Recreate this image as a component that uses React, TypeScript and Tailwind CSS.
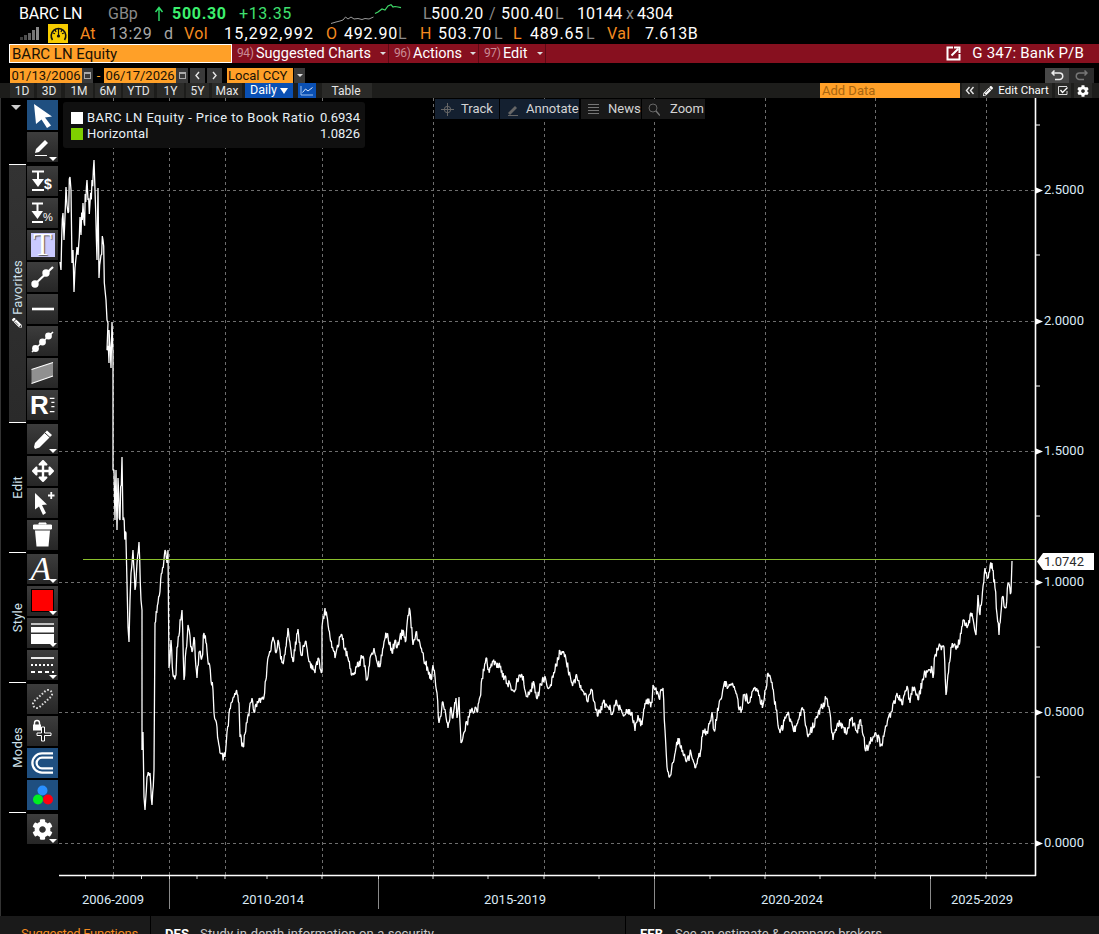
import React from "react";
import { FaCog, FaArrowsAlt, FaPencilAlt } from "react-icons/fa";

const K: number[][] = [
[60,262],[61,270],[63,213],[64,240],[66,187],[67,205],[68,213],[70,177],[71,190],[72,263],[73,250],[74,292],[75,268],[77,247],[78,255],[80,217],[81,235],[83,203],[84,222],[87,180],[88,200],[90,203],[92,180],[94,160],[95,190],[97,260],[98,188],[99,278],[101,255],[103,240],[105,290],[106,300],[107,320],[108,323],[107,350],[109,363],[109,330],[111,368],[112,322],[113,353],[113,470],[114,470],[115,520],[116,470],[117,530],[118,478],[120,520],[122,457],[123,520],[126,533],[126,540],[127,583],[128,627],[129,642],[130,600],[131,573],[133,550],[135,590],[137,563],[139,542],[141,600],[142,610],[142,750],[143,732],[144,797],[145,810],[147,777],[150,773],[152,805],[154,770],[155,623],[158,603],[162,573],[165,550],[167,563],[168,550],[169,668],[171,640],[173,675],[176,675],[177,647],[182,610],[184,680],[188,625],[192,652],[194,637],[197,678],[199,652],[202,657],[204,633],[209,663],[213,690],[214,713],[217,727],[220,753],[225,757],[227,732],[231,703],[236,692],[239,703],[240,737],[243,747],[247,723],[252,698],[254,712],[258,703],[264,697],[267,667],[269,655],[273,637],[276,653],[278,640],[282,663],[285,655],[288,628],[293,662],[298,629],[301,655],[306,641],[309,662],[315,673],[318,658],[322,672],[322,627],[325,608],[330,637],[335,658],[340,637],[342,635],[345,650],[348,658],[352,675],[357,667],[363,656],[367,680],[370,658],[374,648],[377,662],[380,667],[384,642],[387,634],[392,653],[395,640],[397,648],[403,630],[406,640],[408,615],[410,611],[413,645],[416,632],[422,652],[425,662],[428,670],[431,680],[433,665],[437,693],[439,723],[443,702],[448,728],[451,707],[453,718],[456,698],[457,718],[459,697],[461,743],[467,723],[472,708],[477,712],[480,697],[482,678],[486,658],[488,670],[495,661],[500,668],[507,683],[515,690],[519,675],[522,675],[527,696],[534,683],[537,699],[543,677],[550,687],[555,670],[560,651],[564,653],[572,683],[577,677],[588,702],[591,689],[598,716],[603,703],[613,712],[616,700],[622,713],[632,712],[635,731],[638,715],[642,725],[645,703],[652,703],[653,685],[659,698],[663,688],[665,730],[667,767],[669,777],[674,760],[678,738],[682,752],[687,760],[691,753],[695,768],[699,753],[700,757],[703,730],[707,732],[712,712],[714,730],[720,700],[724,684],[728,687],[733,685],[741,713],[744,695],[750,702],[755,687],[763,705],[768,673],[772,682],[776,710],[780,733],[788,712],[794,732],[800,712],[803,710],[808,737],[817,718],[822,707],[826,699],[830,713],[833,740],[838,723],[847,733],[851,718],[857,732],[860,720],[866,751],[875,733],[882,746],[885,730],[891,712],[897,693],[902,705],[907,686],[910,703],[913,688],[918,700],[924,675],[932,668],[933,678],[935,655],[940,646],[944,647],[946,695],[951,647],[958,647],[963,620],[967,628],[972,613],[976,635],[978,595],[980,615],[985,568],[987,578],[992,563],[995,588],[999,635],[1002,598],[1006,608],[1008,583],[1011,592],[1012,561],
];

function buildSeries(): string {
  let s = 12345;
  const rnd = () => {
    s = (s * 1664525 + 1013904223) >>> 0;
    return s / 4294967296 - 0.5;
  };
  const out: string[] = [];
  for (let i = 0; i < K.length - 1; i++) {
    const [x0, y0] = K[i];
    const [x1, y1] = K[i + 1];
    out.push(`${x0},${y0}`);
    const n = Math.floor((x1 - x0) / 0.6);
    for (let j = 1; j < n; j++) {
      const t = j / n;
      const amp = x0 < 126 ? 26 : x0 < 240 ? 11 : 9;
      out.push(`${(x0 + (x1 - x0) * t).toFixed(1)},${(y0 + (y1 - y0) * t + rnd() * amp).toFixed(1)}`);
    }
  }
  out.push("1012,561");
  return out.join(" ");
}
const SERIES = buildSeries();

const VDASH = [113, 169, 225, 322, 433, 544, 654, 765, 875, 986];
const HDASH = [190, 321, 451, 582, 712, 843];
const XTICKS = [85.5, 113, 141.5, 169.5, 197, 225, 267, 322, 378.5, 433, 488, 544, 599, 654.5, 710, 765, 820, 875, 930.5, 986];
const SEPS = [169.5, 378.5, 654.5, 930.5];
const YMINOR = [125, 255, 386, 516, 647, 777];

function Tri() {
  return <span className="absolute right-0 bottom-0 w-0 h-0 border-l-[4px] border-r-[4px] border-t-[4px] border-l-transparent border-r-transparent border-t-white mr-[1px] mb-[1px]" />;
}

function Btn({ children, blue, tri }: { children?: React.ReactNode; blue?: boolean; tri?: boolean }) {
  return (
    <div className={blue ? "relative w-[31px] h-[30px] mb-[2px] bg-[#1f4f80] flex items-center justify-center" : "relative w-[31px] h-[30px] mb-[2px] bg-gradient-to-b from-[#3d3d3d] to-[#262626] flex items-center justify-center"}>
      {children}
      {tri ? <Tri /> : null}
    </div>
  );
}

function I({ children }: { children: React.ReactNode }) {
  return (
    <svg width="31" height="30" viewBox="0 0 31 30" fill="none">
      {children}
    </svg>
  );
}

function Group({ label, children, fill, pencil }: { label?: string; children: React.ReactNode; fill?: boolean; pencil?: boolean }) {
  return (
    <div className="flex">
      <div className={fill ? "ml-[8px] w-[17px] mr-[1px] border-t border-white bg-gradient-to-b from-[#333] to-[#2a2a2a] flex items-center justify-center" : "ml-[8px] w-[17px] mr-[1px] border-t border-white flex items-center justify-center"}>
        {label ? (
          <span className="[writing-mode:vertical-rl] rotate-180 text-[13px] leading-[17px] tracking-[0.2px] text-[#cfe0ea] flex items-center gap-[3px]">
            {pencil ? <FaPencilAlt className="text-white rotate-90" size={10} /> : null}
            {label}
          </span>
        ) : null}
      </div>
      <div className="pt-[2px]">{children}</div>
    </div>
  );
}

function Tab({ className, children }: { className: string; children: React.ReactNode }) {
  return <span className={"flex items-center justify-center h-[15px] text-[12px] text-[#e6e6e6] bg-[#2a2a28] " + className}>{children}</span>;
}

function AxisLabel({ className, children }: { className: string; children: React.ReactNode }) {
  return <span className={"absolute text-[13px] leading-[16px] text-[#dcebf7] " + className}>{children}</span>;
}

export default function App() {
  return (
    <div className="w-[1099px] h-[934px] bg-black overflow-hidden flex flex-col font-['Roboto',sans-serif] text-white">
      {/* Row 1 */}
      <div className="h-[22px] pl-[19px] pt-[6px] flex items-center text-[16px] leading-[18px] shrink-0">
        <span className="w-[89px] tracking-[-0.2px]">BARC LN</span>
        <span className="w-[46px] text-[#8a8a8a]">GBp</span>
        <span className="w-[18px] text-[#33e36a]">
          <svg width="10" height="16" viewBox="0 0 10 16" fill="none"><path d="M5 15V2M1.5 6L5 1.5L8.5 6" stroke="#2fe06a" strokeWidth="1.4" /></svg>
        </span>
        <span className="w-[67px] font-bold text-[#3cf06e] tracking-[0.7px]">500.30</span>
        <span className="w-[92px] text-[#3fe06f] tracking-[0.6px]">+13.35</span>
        <svg width="72" height="22" viewBox="331 1 72 22" className="w-[92px] shrink-0" preserveAspectRatio="xMinYMid meet" fill="none">
          <polyline points="331,21.5 336,20 340,19 343,18 345.5,15 348,17 351,15 354,17 358,16.5 362,17.5 365,16.5 369,17 373.5,15" stroke="#9a9a9a" strokeWidth="1" />
          <polyline points="375,11.5 378,10 382,7 385,8 388,4 391,2.7 393,5 395,4.5 398,5 401,5.7" stroke="#3fd868" strokeWidth="1.2" />
        </svg>
        <span className="w-[8px] text-[#8a8a8a]">L</span>
        <span className="w-[58px] tracking-[0.6px]">500.20</span>
        <span className="w-[12px] text-[#8a8a8a]">/</span>
        <span className="w-[54px] tracking-[0.6px]">500.40</span>
        <span className="w-[22px] text-[#8a8a8a]">L</span>
        <span className="w-[49px] tracking-[0.1px]">10144</span>
        <span className="w-[11px] text-[#8a8a8a]">x</span>
        <span>4304</span>
      </div>
      {/* Row 2 */}
      <div className="h-[22px] pl-[20px] pt-[1px] flex items-center text-[16px] leading-[18px] shrink-0">
        <svg width="20" height="15" viewBox="0 0 20 15" className="w-[28px] shrink-0" preserveAspectRatio="xMinYMid meet">
          <rect x="0" y="11" width="3" height="3" fill="#3c3c3c" />
          <rect x="4" y="9" width="3" height="5" fill="#4e4e4e" />
          <rect x="8" y="7" width="3" height="7" fill="#626262" />
          <rect x="12" y="4" width="3" height="10" fill="#747474" />
          <rect x="16" y="1" width="3" height="13" fill="#888" />
        </svg>
        <span className="w-[20px] h-[19px] bg-[#f7cc00] flex items-center justify-center shrink-0">
          <svg width="17" height="17" viewBox="0 0 17 17" fill="none">
            <path d="M2.5 15A7.3 7.3 0 1 1 14.5 15" stroke="#111" strokeWidth="1.6" />
            <path d="M8.5 4V10M5 4.5L6 7M12 4.5L11 7M3 8L5 8.8M14 8L12 8.8" stroke="#111" strokeWidth="1.2" />
            <circle cx="8.5" cy="11" r="1.6" fill="#111" />
          </svg>
        </span>
        <span className="ml-[12px] w-[29px] text-[#f58a1f]">At</span>
        <span className="w-[55px] text-[#a8a8a8] tracking-[0.7px]">13:29</span>
        <span className="w-[20px] text-[#a8a8a8]">d</span>
        <span className="w-[40px] text-[#f58a1f] tracking-[0.4px]">Vol</span>
        <span className="w-[102px] tracking-[1.2px]">15,292,992</span>
        <span className="w-[18px] text-[#f58a1f]">O</span>
        <span className="w-[54px] tracking-[0.8px]">492.90</span>
        <span className="w-[22px] text-[#8a8a8a]">L</span>
        <span className="w-[18px] text-[#f58a1f]">H</span>
        <span className="w-[56px] tracking-[0.8px]">503.70</span>
        <span className="w-[19px] text-[#8a8a8a]">L</span>
        <span className="w-[17px] text-[#f58a1f]">L</span>
        <span className="w-[56px] tracking-[0.8px]">489.65</span>
        <span className="w-[21px] text-[#8a8a8a]">L</span>
        <span className="w-[38px] text-[#f58a1f] tracking-[0.4px]">Val</span>
        <span className="tracking-[0.5px]">7.613B</span>
      </div>
      {/* Row 3 */}
      <div className="h-[19px] flex pl-[9px] text-[14.5px] leading-[19px] shrink-0">
        <div className="w-[223px] h-[19px] bg-[#ffa028] border border-white text-[#1a1205] pl-[2px] leading-[18px] text-[15px]">BARC LN Equity</div>
        <div className="flex-1 flex bg-[#87101f]">
          <div className="w-[157px] flex items-center pl-[5px] border-r border-[#5c0a15]">
            <span className="w-[19px] text-[#c98c95] text-[12px] tracking-[-0.4px]">94)</span>
            <span className="w-[124px]">Suggested Charts</span>
            <span className="w-0 h-0 border-l-[3px] border-r-[3px] border-t-[3px] border-l-transparent border-r-transparent border-t-[#ddd]" />
          </div>
          <div className="w-[90px] flex items-center pl-[5px] border-r border-[#5c0a15]">
            <span className="w-[19px] text-[#c98c95] text-[12px] tracking-[-0.4px]">96)</span>
            <span className="w-[57px]">Actions</span>
            <span className="w-0 h-0 border-l-[3px] border-r-[3px] border-t-[3px] border-l-transparent border-r-transparent border-t-[#ddd]" />
          </div>
          <div className="w-[67px] flex items-center pl-[5px] border-r border-[#5c0a15]">
            <span className="w-[19px] text-[#c98c95] text-[12px] tracking-[-0.4px]">97)</span>
            <span className="w-[34px]">Edit</span>
            <span className="w-0 h-0 border-l-[3px] border-r-[3px] border-t-[3px] border-l-transparent border-r-transparent border-t-[#ddd]" />
          </div>
          <div className="ml-auto flex items-center pr-[15px] gap-[11px]">
            <svg width="15" height="15" viewBox="0 0 15 15" fill="none">
              <path d="M7 1.5H1.5V13.5H13.5V8" stroke="white" strokeWidth="2" />
              <path d="M5.5 9.5L12 3M8 1.5H13.5V7" stroke="white" strokeWidth="2" />
            </svg>
            <span className="text-[15px] tracking-[0.2px]">G 347: Bank P/B</span>
          </div>
        </div>
      </div>
      {/* Row 4 */}
      <div className="h-[15px] mt-[5px] flex pl-[10px] text-[13px] leading-[15px] shrink-0">
        <span className="w-[72px] bg-[#ffa028] text-[#1a1205] text-center">01/13/2006</span>
        <span className="w-[11px] bg-[#3a3a3a] flex items-center justify-center">
          <span className="w-[7px] h-[7px] border border-[#aaa] border-t-2" />
        </span>
        <span className="w-[11px] text-[#ffa028] text-center">-</span>
        <span className="w-[72px] bg-[#ffa028] text-[#1a1205] text-center">06/17/2026</span>
        <span className="w-[12px] bg-[#3a3a3a] flex items-center justify-center">
          <span className="w-[7px] h-[7px] border border-[#aaa] border-t-2" />
        </span>
        <span className="ml-[2px] w-[15px] bg-[#3a3a3a] flex items-center justify-center">
          <svg width="7" height="9" viewBox="0 0 7 9" fill="none"><path d="M5 1L2 4.5L5 8" stroke="#e8e8e8" strokeWidth="1.4" /></svg>
        </span>
        <span className="ml-[2px] w-[15px] bg-[#3a3a3a] flex items-center justify-center">
          <svg width="7" height="9" viewBox="0 0 7 9" fill="none"><path d="M2 1L5 4.5L2 8" stroke="#e8e8e8" strokeWidth="1.4" /></svg>
        </span>
        <span className="ml-[5px] w-[66px] bg-[#ffa028] text-[#1a1205] pl-[1px]">Local CCY</span>
        <span className="ml-[1px] w-[11px] bg-[#3a3a3a] flex items-center justify-center">
          <span className="w-0 h-0 border-l-[3px] border-r-[3px] border-t-[3px] border-l-transparent border-r-transparent border-t-[#ddd]" />
        </span>
        <span className="ml-auto w-[24px] bg-[#484848] flex items-center justify-center">
          <svg width="13" height="11" viewBox="0 0 13 11" fill="none"><path d="M1 3H8.5A3.2 3.2 0 0 1 8.5 9.5H4M3.5 0.5L1 3L3.5 5.5" stroke="#eee" strokeWidth="1.5" /></svg>
        </span>
        <span className="mr-[5px] w-[25px] bg-[#2c2c2c] flex items-center justify-center">
          <svg width="13" height="11" viewBox="0 0 13 11" fill="none"><path d="M12 3H4.5A3.2 3.2 0 0 0 4.5 9.5H9M9.5 0.5L12 3L9.5 5.5" stroke="#777" strokeWidth="1.5" /></svg>
        </span>
      </div>
      {/* Row 5 */}
      <div className="h-[15px] flex pl-[10px] bg-[#1d1d1b] shrink-0">
        <Tab className="w-[24px]">1D</Tab>
        <Tab className="ml-[3px] w-[24px]">3D</Tab>
        <Tab className="ml-[4px] w-[28px]">1M</Tab>
        <Tab className="ml-[2px] w-[26px]">6M</Tab>
        <Tab className="ml-[2px] w-[31px]">YTD</Tab>
        <Tab className="ml-[3px] w-[27px]">1Y</Tab>
        <Tab className="ml-[2px] w-[23px]">5Y</Tab>
        <Tab className="ml-[3px] w-[30px]">Max</Tab>
        <span className="ml-[3px] w-[48px] h-[15px] bg-[#0a50b4] text-[12.5px] text-white flex items-center justify-center gap-[3px]">
          Daily
          <span className="w-0 h-0 border-l-[4px] border-r-[4px] border-t-[6px] border-l-transparent border-r-transparent border-t-white" />
        </span>
        <span className="ml-[5px] w-[18px] h-[15px] bg-[#0a50b4] flex items-center justify-center">
          <svg width="14" height="11" viewBox="0 0 14 11" fill="none"><path d="M1 1V10H13" stroke="#9cc0ee" strokeWidth="1" /><path d="M2.5 7.5L5.5 4L8 6L12.5 2.5" stroke="#dce9fa" strokeWidth="1" /></svg>
        </span>
        <Tab className="ml-[6px] w-[50px] pr-[2px]">Table</Tab>
        <span className="ml-auto w-[140px] h-[15px] bg-[#ffa028] text-[13px] leading-[16px] text-[#a8650f] pl-[2px] overflow-hidden">Add Data</span>
        <span className="ml-[2px] w-[16px] h-[15px] bg-[#2a2a28] flex items-center justify-center">
          <svg width="10" height="9" viewBox="0 0 10 9" fill="none"><path d="M4.5 1L1.5 4.5L4.5 8M8.5 1L5.5 4.5L8.5 8" stroke="#e8e8e8" strokeWidth="1.4" /></svg>
        </span>
        <span className="ml-[2px] w-[72px] h-[15px] bg-[#2a2a28] text-[11.5px] text-white flex items-center justify-center gap-[5px]">
          <FaPencilAlt size={10} />
          Edit Chart
        </span>
        <span className="ml-[3px] w-[16px] h-[15px] bg-[#2a2a28] flex items-center justify-center">
          <svg width="10" height="9" viewBox="0 0 10 9" fill="none"><path d="M9 0.5H0.5V8.5H9V5" stroke="#ddd" strokeWidth="1" /><path d="M2.5 4L4.5 6.5L9.5 1.5" stroke="#fff" strokeWidth="1.3" /></svg>
        </span>
        <span className="ml-[3px] mr-[7px] w-[18px] h-[15px] bg-[#2a2a28] flex items-center justify-center">
          <FaCog size={12} className="text-white" />
        </span>
      </div>
      {/* Main */}
      <div className="h-[818px] flex shrink-0">
        <aside className="w-[59px] shrink-0 flex flex-col pt-[2px] border-l border-[#333]">
          <div className="flex">
            <div className="w-[26px] pl-[10px] pt-[5px]">
              <span className="block w-0 h-0 border-l-[5px] border-r-[5px] border-t-[5px] border-l-transparent border-r-transparent border-t-[#ccc]" />
            </div>
            <div>
              <Btn blue>
                <I><path d="M7 4L25 16.5L18 17.5L24 25.5L20 28L14.5 19.5L9 24Z" fill="white" /></I>
              </Btn>
              <Btn tri>
                <I>
                  <path d="M9 17L18 8L21 11L12 20L8 21Z" fill="white" />
                  <path d="M8 23.5H20" stroke="white" strokeWidth="1" />
                </I>
              </Btn>
            </div>
          </div>
          <Group label="Favorites" fill pencil>
            <Btn>
              <I>
                <path d="M5 5.5H17M11 5.5V13" stroke="white" strokeWidth="2" />
                <path d="M5 13H17L11 21Z" fill="white" />
                <path d="M5 24H17" stroke="white" strokeWidth="2" />
                <text x="17" y="23" fontFamily="Liberation Sans" fontWeight="700" fontSize="14" fill="white">$</text>
              </I>
            </Btn>
            <Btn>
              <I>
                <path d="M5 5.5H16M10.5 5.5V13" stroke="white" strokeWidth="2" />
                <path d="M4.5 13H16L10.5 21Z" fill="white" />
                <path d="M5 24H16" stroke="white" strokeWidth="2" />
                <text x="16" y="23" fontFamily="Liberation Sans" fontSize="11" fill="white">%</text>
              </I>
            </Btn>
            <Btn>
              <span className="w-[24px] h-[24px] bg-[#cacaff] flex items-center justify-center text-[31px] leading-[24px] text-white font-['Liberation_Serif',serif] [text-shadow:1px_1px_1px_#555]">T</span>
            </Btn>
            <Btn>
              <I>
                <path d="M8 22L26 5" stroke="white" strokeWidth="2.2" />
                <circle cx="8" cy="22" r="3.7" fill="white" />
                <circle cx="19" cy="11" r="3.7" fill="white" />
              </I>
            </Btn>
            <Btn>
              <I><path d="M5 15H27" stroke="white" strokeWidth="2.6" /></I>
            </Btn>
            <Btn>
              <I>
                <path d="M5 26L26 6" stroke="white" strokeWidth="1.6" />
                <circle cx="8.5" cy="22.5" r="3.4" fill="white" />
                <circle cx="15.5" cy="16" r="3.4" fill="white" />
                <circle cx="21.5" cy="10" r="3.4" fill="white" />
              </I>
            </Btn>
            <Btn>
              <I>
                <path d="M4.5 11.5L26 4.5V18L4.5 25.5Z" fill="#909090" />
                <path d="M4.5 11.5L26 4.5M4.5 25.5L26 18" stroke="white" strokeWidth="1.2" />
              </I>
            </Btn>
            <Btn>
              <span className="flex items-center text-[26px] leading-[26px] font-bold font-['Liberation_Sans',sans-serif] text-white w-[25px]">
                R
                <svg width="8" height="20" viewBox="0 0 8 20"><path d="M1 1.5H7M3 6.5H7M3 12H7M1 18.5H7" stroke="white" strokeWidth="1.6" /></svg>
              </span>
            </Btn>
          </Group>
          <Group label="Edit">
            <Btn tri>
              <I>
                <path d="M8 19L20 6.5L25 11L12.5 23.5L8 25L7 23Z" fill="white" />
                <path d="M18 9L23 13.5" stroke="#333" strokeWidth="1" />
              </I>
            </Btn>
            <Btn><FaArrowsAlt size={22} className="text-white" /></Btn>
            <Btn>
              <I>
                <path d="M8 5L20 16.5L15 17L19 25L16 27L12 18.5L8 21.5Z" fill="white" />
                <path d="M21 7.5H27.5M24.25 4V11" stroke="white" strokeWidth="1.8" />
              </I>
            </Btn>
            <Btn>
              <I>
                <path d="M12 4.5V3H19V4.5M6.5 5H24.5V9H6.5Z" fill="white" stroke="white" strokeWidth="1" />
                <path d="M8 10.5H23L21.5 26.5H9.5Z" fill="white" />
              </I>
            </Btn>
          </Group>
          <Group label="Style">
            <Btn tri>
              <span className="text-[34px] leading-[30px] italic text-white font-['Liberation_Serif',serif] pr-[3px]">A</span>
            </Btn>
            <Btn tri>
              <span className="w-[23px] h-[23px] bg-[#ff0000] border border-black mb-[1px]" />
            </Btn>
            <Btn tri>
              <I>
                <path d="M4 6H27" stroke="white" strokeWidth="1.4" />
                <rect x="4" y="9" width="23" height="5.5" fill="white" />
                <rect x="4" y="16" width="23" height="10" fill="white" />
              </I>
            </Btn>
            <Btn tri>
              <I>
                <path d="M4 8H27" stroke="white" strokeWidth="1.8" />
                <path d="M4 15H27" stroke="white" strokeWidth="1.8" strokeDasharray="2 2" />
                <path d="M4 22H27" stroke="white" strokeWidth="1.8" strokeDasharray="4 3" />
              </I>
            </Btn>
          </Group>
          <Group label="Modes">
            <Btn>
              <I>
                <rect x="4" y="11" width="23" height="8" rx="4" transform="rotate(-42 15.5 15)" stroke="#ddd" strokeWidth="2" strokeDasharray="1.6 1.8" />
              </I>
            </Btn>
            <Btn>
              <I>
                <path d="M7.5 9V7A2.5 2.5 0 0 1 12.5 7V9" stroke="white" strokeWidth="1.4" />
                <rect x="6" y="8.5" width="8" height="6" fill="white" />
                <path d="M14.5 17H10V19.5H14.5V25H17.5V19.5H24V17H17.5V11H14.5Z" fill="#1a1a1a" stroke="white" strokeWidth="1" />
              </I>
            </Btn>
            <Btn blue>
              <I>
                <path d="M26 7.5H15A7.5 7.5 0 0 0 15 22.5H26" stroke="white" strokeWidth="6.5" />
                <path d="M26 7.5H15A7.5 7.5 0 0 0 15 22.5H26" stroke="#1f4f80" strokeWidth="2" />
              </I>
            </Btn>
            <Btn blue>
              <I>
                <circle cx="15.5" cy="10.5" r="5" fill="#2a90ff" />
                <circle cx="11" cy="19.5" r="5" fill="#00ee20" />
                <circle cx="21" cy="19.5" r="5" fill="#ff0010" />
              </I>
            </Btn>
          </Group>
          <Group>
            <Btn tri><FaCog size={21} className="text-white" /></Btn>
          </Group>
        </aside>

        <div className="relative flex-1">
          <svg width="1040" height="818" viewBox="59 98 1040 818" className="absolute inset-0" fill="none">
            {VDASH.map((x) => (
              <path key={x} d={`M${x + 0.5} 98V875`} stroke="#6e6e6e" strokeWidth="1" strokeDasharray="3 3" />
            ))}
            {HDASH.map((y) => (
              <path key={y} d={`M59 ${y + 0.5}H1035`} stroke="#6e6e6e" strokeWidth="1" strokeDasharray="3 3" />
            ))}
            {SEPS.map((x) => (
              <path key={x} d={`M${x} 875V909`} stroke="#8a8a8a" strokeWidth="1" />
            ))}
            {XTICKS.map((x) => (
              <path key={x} d={`M${x} 875V879`} stroke="#ddd" strokeWidth="1" />
            ))}
            <polyline points={SERIES} stroke="white" strokeWidth="1.3" strokeLinejoin="bevel" />
            <path d="M83 559.5H1036" stroke="#8abf2c" strokeWidth="1" />
            <path d="M1035.5 98V876M59 875.5H1036" stroke="white" strokeWidth="1.6" />
            {YMINOR.map((y) => (
              <path key={y} d={`M1036 ${y}H1040`} stroke="white" strokeWidth="1" />
            ))}
            {HDASH.map((y) => (
              <polygon key={y} points={`1036,${y - 2.5} 1043,${y + 0.5} 1036,${y + 3.5}`} fill="white" />
            ))}
          </svg>

          {/* Legend */}
          <div className="absolute left-[4px] top-[4px] w-[302px] h-[46px] bg-[#101010] rounded-[3px] pl-[8px] pt-[8px] text-[13px] leading-[16px] text-[#e8f0f6]">
            <div className="flex items-center h-[16px]">
              <span className="w-[12px] h-[12px] bg-white mr-[4px]" />
              <span className="w-[233px] tracking-[0.45px]">BARC LN Equity - Price to Book Ratio</span>
              <span>0.6934</span>
            </div>
            <div className="flex items-center h-[16px]">
              <span className="w-[12px] h-[12px] bg-[#7fd000] mr-[4px]" />
              <span className="w-[233px] tracking-[0.2px]">Horizontal</span>
              <span>1.0826</span>
            </div>
          </div>

          {/* Chart tools */}
          <div className="absolute left-[376px] top-[1px] h-[20px] flex text-[13px] leading-[20px] text-[#d4d4d4]">
            <div className="w-[64px] bg-[#142030] flex items-center pl-[6px] gap-[7px]">
              <svg width="13" height="13" viewBox="0 0 13 13" fill="none"><circle cx="6.5" cy="6.5" r="3.2" stroke="#666" /><path d="M6.5 0V13M0 6.5H13" stroke="#666" /></svg>
              Track
            </div>
            <div className="ml-[1px] w-[79px] bg-[#142030] flex items-center pl-[7px] gap-[7px]">
              <svg width="12" height="13" viewBox="0 0 12 13" fill="none"><path d="M1 10L8 3L10 5L3 12" fill="#666" /><path d="M1 12.5H11" stroke="#666" /></svg>
              Annotate
            </div>
            <div className="ml-[2px] w-[60px] bg-[#191919] flex items-center pl-[7px] gap-[9px]">
              <svg width="11" height="12" viewBox="0 0 11 12" fill="none"><path d="M0 1.5H11M0 4.5H11M0 7.5H11M0 10.5H11" stroke="#777" /></svg>
              News
            </div>
            <div className="ml-[1px] w-[63px] bg-[#191919] flex items-center pl-[6px] gap-[10px]">
              <svg width="12" height="13" viewBox="0 0 12 13" fill="none"><circle cx="5" cy="5" r="4" stroke="#666" /><path d="M8 8L12 12.5" stroke="#777" strokeWidth="1.4" /></svg>
              Zoom
            </div>
          </div>

          {/* Y labels */}
          <AxisLabel className="left-[985px] top-[84px]">2.5000</AxisLabel>
          <AxisLabel className="left-[985px] top-[215px]">2.0000</AxisLabel>
          <AxisLabel className="left-[985px] top-[345px]">1.5000</AxisLabel>
          <AxisLabel className="left-[985px] top-[476px]">1.0000</AxisLabel>
          <AxisLabel className="left-[985px] top-[606px]">0.5000</AxisLabel>
          <AxisLabel className="left-[985px] top-[737px]">0.0000</AxisLabel>
          <span className="absolute left-[978px] top-[455px] w-[57px] h-[17px] bg-white text-[#2b2b2b] text-[13px] leading-[17px] pl-[7px] [clip-path:polygon(6px_0,100%_0,100%_100%,6px_100%,0_50%)]">1.0742</span>

          {/* X labels */}
          <AxisLabel className="left-[23px] top-[794px]">2006-2009</AxisLabel>
          <AxisLabel className="left-[183px] top-[794px]">2010-2014</AxisLabel>
          <AxisLabel className="left-[425px] top-[794px]">2015-2019</AxisLabel>
          <AxisLabel className="left-[702px] top-[794px]">2020-2024</AxisLabel>
          <AxisLabel className="left-[892px] top-[794px]">2025-2029</AxisLabel>
        </div>
      </div>
      {/* Bottom bar */}
      <div className="h-[18px] flex bg-[#1a1a1a] text-[13px] leading-[16px] overflow-hidden shrink-0">
        <div className="w-[151px] pl-[21px] pt-[10px] border-r border-black text-[#f58a1f] whitespace-nowrap tracking-[-0.25px]">Suggested Functions</div>
        <div className="w-[475px] pl-[14px] pt-[10px] border-r border-black text-[#c8c8c8] whitespace-nowrap tracking-[0.1px]">
          <span className="font-bold text-white mr-[11px]">DES</span>Study in-depth information on a security
        </div>
        <div className="flex-1 pl-[14px] pt-[10px] text-[#c8c8c8] whitespace-nowrap tracking-[0.05px]">
          <span className="font-bold text-white mr-[12px]">EEB</span>See an estimate &amp; compare brokers
        </div>
      </div>
    </div>
  );
}
